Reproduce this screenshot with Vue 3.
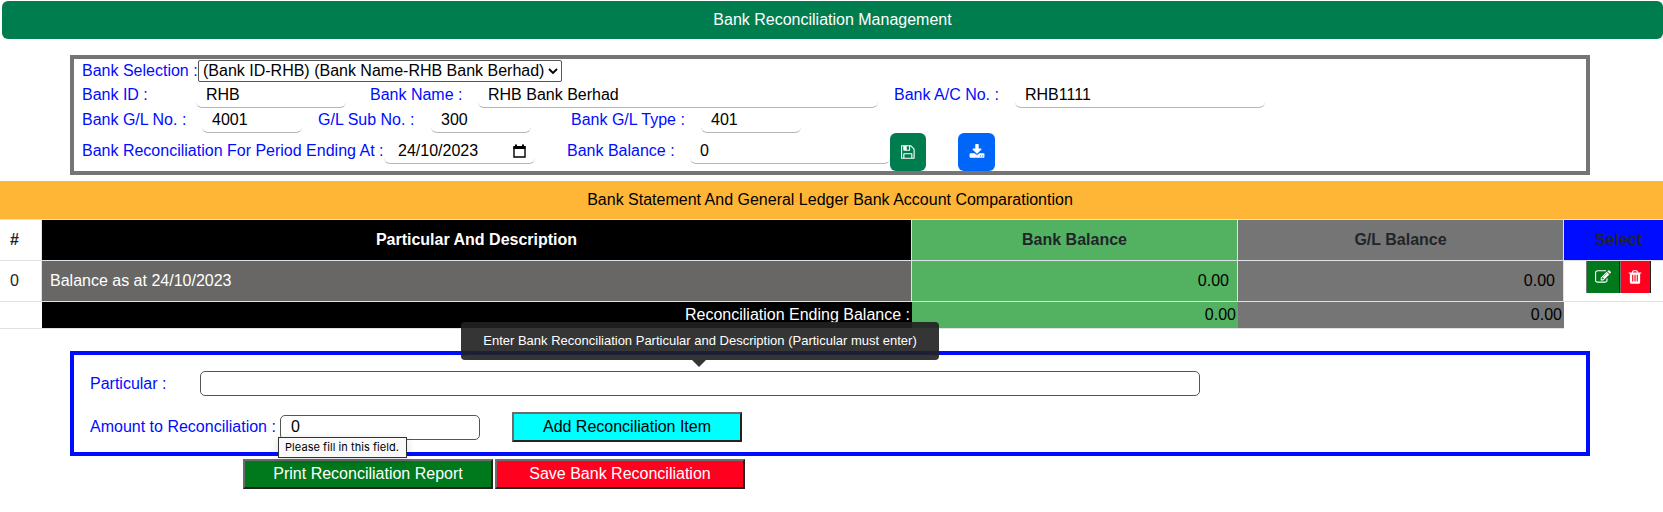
<script setup>
const bankRow = [
  { label: 'Bank ID :', value: 'RHB', cls: 'id' },
  { label: 'Bank Name :', value: 'RHB Bank Berhad', cls: 'name' },
  { label: 'Bank A/C No. :', value: 'RHB1111', cls: 'account' },
]
const ledgerRow = [
  { label: 'Bank G/L No. :', value: '4001', cls: 'gl' },
  { label: 'G/L Sub No. :', value: '300', cls: 'sub' },
  { label: 'Bank G/L Type :', value: '401', cls: 'type' },
]
</script>

<template>
  <div class="page">
    <header class="title">Bank Reconciliation Management</header>

    <section class="bank">
      <div class="line first">
        <span class="label sel">Bank Selection :</span>
        <div class="select">
          <span>(Bank ID-RHB) (Bank Name-RHB Bank Berhad)</span>
          <svg width="10" height="7" viewBox="0 0 10 7"><path d="M1 1l4 4 4-4" fill="none" stroke="#000" stroke-width="1.8" /></svg>
        </div>
      </div>
      <div class="line second">
        <div v-for="f in bankRow" :key="f.label" class="field" :class="f.cls">
          <span class="label">{{ f.label }}</span><span class="input">{{ f.value }}</span>
        </div>
      </div>
      <div class="line third">
        <div v-for="f in ledgerRow" :key="f.label" class="field" :class="f.cls">
          <span class="label">{{ f.label }}</span><span class="input">{{ f.value }}</span>
        </div>
      </div>
      <div class="line fourth">
        <div class="field period">
          <span class="label">Bank Reconciliation For Period Ending At :</span>
          <span class="input date">24/10/2023
            <svg width="13" height="14" viewBox="0 0 13 14"><path d="M1 3h11v10H1z" fill="none" stroke="#000" stroke-width="1.4" /><path d="M.5 2h12v3H.5zM2 .5h2V3H2zM9 .5h2V3H9z" /></svg>
          </span>
        </div>
        <div class="field balance">
          <span class="label">Bank Balance :</span><span class="input">0</span>
        </div>
        <button class="square save">
          <svg width="13.7" height="16" viewBox="0 0 1536 1792"><path d="M384 1536h768v-384h-768v384zm896 0h128v-896q0-14-10-38.5t-20-34.5l-281-281q-10-10-34-20t-39-10v416q0 40-28 68t-68 28h-576q-40 0-68-28t-28-68v-416h-128v1280h128v-416q0-40 28-68t68-28h832q40 0 68 28t28 68v416zm-384-928v-320q0-13-9.500-22.500t-22.500-9.500h-192q-13 0-22.500 9.500t-9.500 22.500v320q0 13 9.500 22.500t22.500 9.500h192q13 0 22.500-9.500t9.500-22.500zm640 32v928q0 40-28 68t-68 28h-1344q-40 0-68-28t-28-68v-1344q0-40 28-68t68-28h928q40 0 88 20t76 48l280 280q28 28 48 76t20 88z" /></svg>
        </button>
        <button class="square load">
          <svg width="16" height="16" viewBox="0 0 1792 1792"><path d="M1344 1344q0-26-19-45t-45-19-45 19-19 45 19 45 45 19 45-19 19-45zm256 0q0-26-19-45t-45-19-45 19-19 45 19 45 45 19 45-19 19-45zm128-224v320q0 40-28 68t-68 28h-1472q-40 0-68-28t-28-68v-320q0-40 28-68t68-28h465l135 136q58 56 136 56t136-56l136-136h464q40 0 68 28t28 68zm-325-569q17 41-14 70l-448 448q-18 19-45 19t-45-19l-448-448q-31-29-14-70 17-39 59-39h256v-448q0-26 19-45t45-19h256q26 0 45 19t19 45v448h256q42 0 59 39z" /></svg>
        </button>
      </div>
    </section>

    <div class="banner">Bank Statement And General Ledger Bank Account Comparationtion</div>
    <div class="grid">
      <div class="c num b">#</div>
      <div class="c head black">Particular And Description</div>
      <div class="c head green">Bank Balance</div>
      <div class="c head gray">G/L Balance</div>
      <div class="c head blue">Select</div>
      <div class="c num">0</div>
      <div class="c desc">Balance as at 24/10/2023</div>
      <div class="c amt green">0.00</div>
      <div class="c amt gray">0.00</div>
      <div class="c acts">
        <button class="mini edit">
          <svg width="16" height="16" viewBox="0 0 1792 1792"><path d="M888 1184l116-116-152-152-116 116v56h96v96h56zm440-720q-16-16-33 1l-350 350q-17 17-1 33t33-1l350-350q17-17 1-33zm80 594v190q0 119-84.500 203.500t-203.500 84.500h-832q-119 0-203.500-84.500t-84.500-203.500v-832q0-119 84.500-203.500t203.500-84.500h832q63 0 117 25 15 7 18 23 3 17-9 29l-49 49q-14 14-32 8-23-6-45-6h-832q-66 0-113 47t-47 113v832q0 66 47 113t113 47h832q66 0 113-47t47-113v-126q0-13 9-22l64-64q15-15 35-7t20 29zm-96-738l288 288-672 672h-288v-288zm444 132l-92 92-288-288 92-92q28-28 68-28t68 28l152 152q28 28 28 68t-28 68z" /></svg>
        </button>
        <button class="mini del">
          <svg width="16" height="16" viewBox="0 0 1792 1792"><path d="M704 1376v-704q0-14-9-23t-23-9h-64q-14 0-23 9t-9 23v704q0 14 9 23t23 9h64q14 0 23-9t9-23zm256 0v-704q0-14-9-23t-23-9h-64q-14 0-23 9t-9 23v704q0 14 9 23t23 9h64q14 0 23-9t9-23zm256 0v-704q0-14-9-23t-23-9h-64q-14 0-23 9t-9 23v704q0 14 9 23t23 9h64q14 0 23-9t9-23zm-544-992h448l-48-117q-7-9-17-11h-317q-10 2-17 11zm928 32v64q0 14-9 23t-23 9h-96v948q0 83-47 143.500t-113 60.500h-832q-66 0-113-58.500t-47-141.500v-952h-96q-14 0-23-9t-9-23v-64q0-14 9-23t23-9h309l70-167q15-37 54-63t79-26h320q40 0 79 26t54 63l70 167h309q14 0 23 9t9 23z" /></svg>
        </button>
      </div>
      <div class="c foot"></div>
      <div class="c foot black">Reconciliation Ending Balance :</div>
      <div class="c foot green">0.00</div>
      <div class="c foot gray">0.00</div>
    </div>

    <section class="entry">
      <div class="eline">
        <span class="label lp">Particular :</span>
        <div class="box wide">
          <div class="tip">Enter Bank Reconciliation Particular and Description (Particular must enter)</div>
        </div>
      </div>
      <div class="eline two">
        <span class="label la">Amount to Reconciliation :</span>
        <div class="box short">0
          <div class="hint">Please fill in this field.</div>
        </div>
        <button class="btn add">Add Reconciliation Item</button>
      </div>
    </section>
    <div class="actions">
      <button class="btn print">Print Reconciliation Report</button>
      <button class="btn commit">Save Bank Reconciliation</button>
    </div>
  </div>
</template>

<style>
body { margin: 0; background: #fff; }
</style>

<style scoped>
.page, .page * { box-sizing: border-box; }
.page {
  width: 1663px; height: 512px; padding-top: 1px; overflow: hidden;
  font: 16px/24px "Liberation Sans", Arial, sans-serif; color: #000; white-space: nowrap;
}
button { font: inherit; padding: 0; margin: 0; }
.page svg { display: block; flex: none; }
.title {
  height: 38px; margin-left: 2px; border-radius: 6px; background: #007d4e; color: #fff;
  text-align: center; line-height: 37px;
}
.bank {
  width: 1520px; height: 120px; margin: 16px 0 0 70px; border: 4px solid #757575; padding-left: 8px;
}
.line { display: flex; }
.first { height: 25px; padding-top: 1px; }
.second { height: 24px; }
.third { height: 25px; padding-top: 1px; }
.fourth { height: 38px; }
.label { color: #000cff; flex: none; }
.sel { width: 116px; line-height: 22px; }
.select {
  width: 364px; height: 22px; border: 1px solid #555; border-radius: 2px; padding: 0 3px 0 4px;
  display: flex; align-items: center; justify-content: space-between; line-height: 20px;
}
.field { display: flex; }
.input {
  height: 24px; padding-left: 10px; line-height: 21px; border-radius: 6px;
  border-bottom: 1px solid #b3b5b8;
}
.second .label, .third .label { line-height: 21px; }
.id .label { width: 114px; } .id .input { width: 150px; }
.name { margin-left: 24px; } .name .label { width: 108px; } .name .input { width: 400px; }
.account { margin-left: 16px; } .account .label { width: 121px; } .account .input { width: 250px; }
.gl .label { width: 120px; } .gl .input { width: 100px; }
.sub { margin-left: 16px; } .sub .label { width: 113px; } .sub .input { width: 100px; }
.type { margin-left: 40px; } .type .label { width: 130px; } .type .input { width: 100px; }
.fourth .field { padding-top: 6px; height: 31px; }
.fourth .label, .fourth .input { line-height: 23px; height: 25px; }
.period .label { width: 302px; }
.fourth .date { width: 151px; padding: 0 9px 1px 14px; display: flex; justify-content: space-between; align-items: center; }
.balance { margin-left: 32px; }
.balance .label { width: 123px; } .balance .input { width: 200px; }
.square {
  height: 38px; border: 0; border-radius: 6px; display: flex; align-items: center; justify-content: center; fill: #fff;
}
.save { width: 36px; background: #007d4e; }
.load { width: 37px; margin-left: 32px; background: #0066f9; }
.banner { height: 38px; margin-top: 6px; background: #ffb637; text-align: center; line-height: 37px; padding-right: 3px; }
.grid {
  display: grid; grid-template-columns: 42px 870px 326px 326px 99px; grid-template-rows: 41px 41px 27px;
  border-top: 1px solid #dee2e6;
}
.c { border: 0 solid #dee2e6; border-width: 0 1px 1px 0; line-height: 39px; }
.num { padding-left: 10px; color: #212529; }
.b, .head { font-weight: bold; }
.head { text-align: center; color: #212529; }
.head.black { color: #fff; }
.black { background: #000; color: #fff; }
.green { background: #52b262; }
.gray { background: #757575; }
.blue { background: #000cff; padding-left: 10px; border-right: 0; }
.desc { background: #686765; color: #fff; padding-left: 8px; }
.amt { text-align: right; padding-right: 8px; }
.acts { display: flex; border-right: 0; padding-left: 22px; }
.mini { height: 32px; border: solid; border-width: 0 1px; display: flex; align-items: center; justify-content: center; fill: #fff; }
.edit { width: 34px; background: #00781c; border-left-color: #767676; border-right-color: #222; }
.del { width: 31px; background: #ff001f; border-left-color: #767676; border-right-color: #222; padding-right: 1px; }
.foot { border-right: 0; text-align: right; line-height: 25px; padding-right: 2px; }
.entry { width: 1520px; height: 105px; margin: 22px 0 0 70px; border: 4px solid #000cff; padding: 16px 0 0 16px; }
.eline { display: flex; height: 25px; line-height: 25px; }
.two { margin-top: 16px; height: 30px; line-height: 29px; }
.lp { width: 110px; }
.la { width: 190px; }
.box { position: relative; height: 25px; border: 1px solid #555; border-radius: 5px; }
.wide { width: 1000px; }
.short { width: 200px; margin-top: 3px; padding-left: 10px; line-height: 21px; }
.btn { height: 30px; border: 2px solid; border-color: #6b6b6b #222 #222 #6b6b6b; line-height: 26px; text-align: center; color: #fff; }
.add { width: 230px; margin-left: 32px; background: #00ffff; color: #000; }
.print { width: 250px; background: #00781c; }
.commit { width: 250px; background: #ff001f; }
.actions { display: flex; gap: 2px; margin: 3px 0 0 243px; }
/* tooltip over the particular field */
.tip {
  position: absolute; left: 260px; top: -50px; width: 478px; height: 38px; border-radius: 4px;
  background: rgba(33, 33, 33, .91); color: #fff; font-size: 13px; line-height: 38px; text-align: center; z-index: 2;
}
.tip::after {
  content: ""; position: absolute; left: 231px; top: 38px; border: 7px solid transparent; border-bottom: 0;
  border-top-color: rgba(33, 33, 33, .91);
}
.hint {
  position: absolute; left: -3px; top: 21px; width: 129px; height: 21px; border: 1px solid #333; background: #f9f9f9;
  font: 11px/19px Inter, sans-serif; padding-left: 6px; letter-spacing: .06px; z-index: 2; box-shadow: 0 2px 8px rgba(0, 0, 0, .15);
}
</style>
